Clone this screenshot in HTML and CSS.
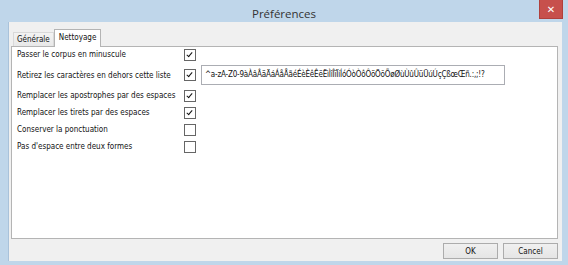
FILE: index.html
```html
<!DOCTYPE html>
<html lang="fr">
<head>
  <meta charset="UTF-8" />
  <title>Préférences</title>
  <link rel="stylesheet" href="styles.css">
</head>
<body>
  <div class="window">
    <div class="titlebar">
      <span class="title">Préférences</span>
      <div class="close-button">&#x2715;</div>
    </div>

    <div class="client">
      <div class="tabs">
        <div class="tab">Générale</div>
        <div class="tab active">Nettoyage</div>
      </div>

      <div class="panel">
        <div class="row">
          <span class="label">Passer le corpus en minuscule</span>
          <span class="checkbox checked"></span>
        </div>
        <div class="row tall">
          <span class="label">Retirez les caractères en dehors cette liste</span>
          <span class="checkbox checked"></span>
          <div class="text-input">^a-zA-Z0-9àÀâÂäÄáÁåÅãéÉèÈêÊëËìÌîÎïÏíÍóÓòÒôÔöÖõÕøØùÙûÛüÜúÚçÇßœŒñ.:,;!?</div>
        </div>
        <div class="row">
          <span class="label">Remplacer les apostrophes par des espaces</span>
          <span class="checkbox checked"></span>
        </div>
        <div class="row">
          <span class="label">Remplacer les tirets par des espaces</span>
          <span class="checkbox checked"></span>
        </div>
        <div class="row">
          <span class="label">Conserver la ponctuation</span>
          <span class="checkbox"></span>
        </div>
        <div class="row">
          <span class="label">Pas d'espace entre deux formes</span>
          <span class="checkbox"></span>
        </div>
      </div>

      <div class="buttons">
        <button class="btn">OK</button>
        <button class="btn">Cancel</button>
      </div>
    </div>
  </div>
</body>
</html>
```

FILE: styles.css
```css
body {
  margin: 0;
  padding: 0;
  background: #bfd6ea;
  font-family: 'DejaVu Sans Condensed', 'Liberation Sans', Arial, sans-serif;
  font-size: 8px;
  color: #111;
}

.window {
  width: 568px;
  height: 265px;
  display: flex;
  flex-direction: column;
}

.titlebar {
  position: relative;
  height: 22px;
  display: flex;
  justify-content: center;
  align-items: center;
}

.title {
  font-family: 'Open Sans', 'DejaVu Sans', sans-serif;
  font-size: 11.5px;
  color: #333;
  margin-top: 5px;
}

.close-button {
  position: absolute;
  top: 0;
  right: 5px;
  width: 24px;
  height: 19px;
  background: #c7504c;
  border: 1px solid #b0403c;
  border-top: none;
  box-sizing: border-box;
  color: #fff;
  font-size: 10px;
  display: flex;
  justify-content: center;
  align-items: center;
  font-family: 'DejaVu Sans', sans-serif;
}

.client {
  margin: 0 6px 4px 8px;
  flex: 1;
  background: #f0f0f0;
  border-left: 1px solid #a9c2da;
  padding: 0 4px 2px 2px;
  display: flex;
  flex-direction: column;
}

.tabs {
  display: flex;
  align-items: flex-end;
  padding-left: 2px;
  margin-top: 6px;
  height: 18px;
}

.tab {
  height: 13px;
  padding: 0 3px;
  border: 1px solid #d9d9d9;
  border-bottom: none;
  background: linear-gradient(#f3f3f3, #e8e8e8);
  line-height: 14px;
}

.tab.active {
  height: 17px;
  padding: 0 4px;
  line-height: 15px;
  background: #fff;
  border-color: #b4b4b4;
  margin-bottom: -1px;
  position: relative;
  z-index: 1;
}

.panel {
  flex: 1;
  background: #fff;
  border: 1px solid #b4b4b4;
  padding: 1px 5px;
  display: flex;
  flex-direction: column;
  gap: 4px;
}

.row {
  display: flex;
  align-items: center;
  height: 13px;
}

.row.tall {
  height: 20px;
}

.label {
  width: 167px;
  white-space: nowrap;
}

.checkbox {
  width: 10px;
  height: 10px;
  border: 1px solid #666;
  background: #fff;
  position: relative;
}

.checkbox.checked::after {
  content: "";
  position: absolute;
  left: 3px;
  top: 1px;
  width: 2px;
  height: 5px;
  border: solid #111;
  border-width: 0 1.5px 1.5px 0;
  transform: rotate(40deg);
}

.text-input {
  margin-left: 5px;
  width: 296px;
  height: 18px;
  border: 1px solid #abadb3;
  padding: 0 3px;
  line-height: 18px;
  letter-spacing: -0.2px;
  white-space: nowrap;
  overflow: hidden;
}

.buttons {
  display: flex;
  justify-content: flex-end;
  gap: 5px;
  padding-top: 4px;
}

.btn {
  width: 55px;
  height: 16px;
  padding: 0;
  font-family: 'DejaVu Sans Condensed', 'Liberation Sans', Arial, sans-serif;
  font-size: 8px;
  color: #111;
  background: linear-gradient(#f0f0f0, #e5e5e5);
  border: 1px solid #acacac;
}
```
